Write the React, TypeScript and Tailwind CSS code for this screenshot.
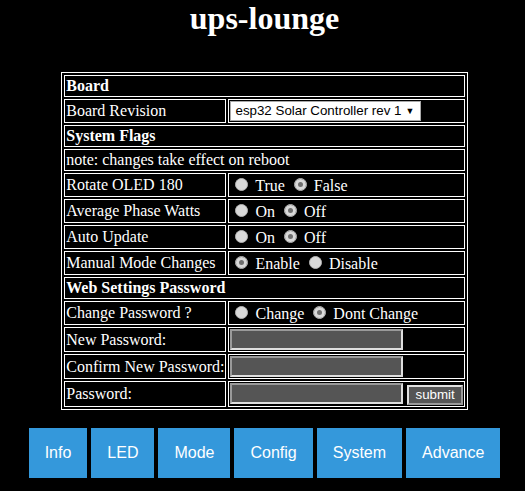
import React from "react";

const serif = { fontFamily: '"Liberation Serif", "Times New Roman", serif' };
const sans = { fontFamily: '"Liberation Sans", Arial, sans-serif' };

const Radio: React.FC<{ checked?: boolean }> = ({ checked }) => (
  <span
    className={
      checked
        ? "inline-block w-[13px] h-[13px] rounded-full ml-[5px] mr-[3px] mt-[3px] border border-[#b5b5b5] bg-[#6e6e6e] shadow-[inset_0_0_0_3px_#d9d9d9]"
        : "inline-block w-[13px] h-[13px] rounded-full ml-[5px] mr-[3px] mt-[3px] border border-[#b5b5b5] bg-[#d9d9d9]"
    }
  />
);

const Cell: React.FC<{ children?: React.ReactNode; colSpan?: number; bold?: boolean }> = ({
  children,
  colSpan,
  bold,
}) => (
  <td
    colSpan={colSpan}
    className={"border border-white p-[1px] text-left align-middle whitespace-nowrap " + (bold ? "font-bold" : "")}
  >
    {children}
  </td>
);

const TextBox: React.FC = () => (
  <input
    type="password"
    className="w-[173px] h-[21px] bg-[#555555] border-2 border-t-[#9a9a9a] border-l-[#9a9a9a] border-b-[#dedede] border-r-[#dedede] px-[2px] py-[1px] align-baseline text-white"
  />
);

const App: React.FC = () => {
  const tabs: string[] = ["Info", "LED", "Mode", "Config", "System", "Advance"];

  return (
    <div className="min-h-[491px] w-full bg-black text-white pl-[4px] leading-[normal]" style={serif}>
      <h1 className="text-[32px] font-bold text-center leading-[37px]">ups-lounge</h1>

      <div className="flex justify-center mt-[35px]">
        <table className="border border-white border-separate border-spacing-[2px] text-[16px]">
          <tbody>
            <tr>
              <Cell colSpan={2} bold>Board</Cell>
            </tr>
            <tr>
              <Cell>Board Revision</Cell>
              <Cell>
                <span className="relative inline-block align-middle">
                  <select
                    className="appearance-none bg-white text-black border border-[#a9a9a9] h-[20px] w-[191px] pl-[4px] text-[13.33px] leading-[16px]"
                    style={sans}
                    defaultValue="1"
                  >
                    <option value="1">esp32 Solar Controller rev 1</option>
                  </select>
                  <span className="absolute right-[7px] top-[4px] text-black text-[9px] leading-[12px] pointer-events-none">
                    ▼
                  </span>
                </span>
              </Cell>
            </tr>
            <tr>
              <Cell colSpan={2} bold>System Flags</Cell>
            </tr>
            <tr>
              <Cell colSpan={2}>note: changes take effect on reboot</Cell>
            </tr>
            <tr>
              <Cell>Rotate OLED 180</Cell>
              <Cell>
                <Radio /> True <Radio checked /> False
              </Cell>
            </tr>
            <tr>
              <Cell>Average Phase Watts</Cell>
              <Cell>
                <Radio /> On <Radio checked /> Off
              </Cell>
            </tr>
            <tr>
              <Cell>Auto Update</Cell>
              <Cell>
                <Radio /> On <Radio checked /> Off
              </Cell>
            </tr>
            <tr>
              <Cell>Manual Mode Changes</Cell>
              <Cell>
                <Radio checked /> Enable <Radio /> Disable
              </Cell>
            </tr>
            <tr>
              <Cell colSpan={2} bold>Web Settings Password</Cell>
            </tr>
            <tr>
              <Cell>Change Password ?</Cell>
              <Cell>
                <Radio /> Change <Radio checked /> Dont Change
              </Cell>
            </tr>
            <tr>
              <Cell>New Password:</Cell>
              <Cell>
                <TextBox />
              </Cell>
            </tr>
            <tr>
              <Cell>Confirm New Password:</Cell>
              <Cell>
                <TextBox />
              </Cell>
            </tr>
            <tr>
              <Cell>Password:</Cell>
              <Cell>
                <TextBox />{" "}
                <button
                  className="h-[20px] px-[6px] bg-[#555555] text-white text-[13.33px] leading-[14px] border-2 border-t-[#e0e0e0] border-l-[#e0e0e0] border-b-[#9a9a9a] border-r-[#9a9a9a] align-baseline"
                  style={sans}
                >
                  submit
                </button>
              </Cell>
            </tr>
          </tbody>
        </table>
      </div>

      <div className="flex justify-center gap-[4px] mt-[18px]" style={sans}>
        {tabs.map((t) => (
          <div key={t} className="bg-[#3498db] text-white text-[16px] leading-[18px] p-[16px]">
            {t}
          </div>
        ))}
      </div>
    </div>
  );
};

export default App;
